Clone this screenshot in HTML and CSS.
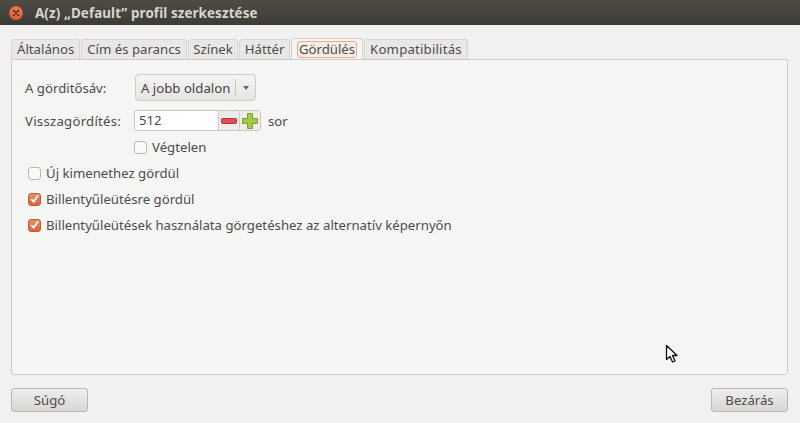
FILE: index.html
```html
<!DOCTYPE html>
<html lang="hu">
<head>
<meta charset="utf-8">
<title>A(z) „Default” profil szerkesztése</title>
<link rel="stylesheet" href="styles.css">
</head>
<body>
<div class="window">
  <header class="titlebar">
    <span class="close"><svg width="8" height="8" viewBox="0 0 8 8"><path d="M1.5 1.5l5 5M6.5 1.5l-5 5" stroke="#4a1c0c" stroke-width="1.4" stroke-linecap="round"/></svg></span>
    <span class="title">A(z) „Default” profil szerkesztése</span>
  </header>
  <main class="content">
    <nav class="tabs">
      <span class="tab t1">Általános</span>
      <span class="tab t2">Cím és parancs</span>
      <span class="tab t3">Színek</span>
      <span class="tab t4">Háttér</span>
      <span class="tab active"><span class="focus">Gördülés</span></span>
      <span class="tab t6">Kompatibilitás</span>
    </nav>
    <section class="panel">
      <div class="row r1">
        <span class="label l1">A görditősáv:</span>
        <span class="combo"><span class="combo-text">A jobb oldalon</span><span class="combo-arrow"><i class="tri"></i></span></span>
      </div>
      <div class="row r2">
        <span class="label l2">Visszagördítés:</span>
        <span class="spin">
          <span class="spin-value">512</span>
          <span class="spin-btn"><svg width="16" height="16" viewBox="0 0 16 16"><rect x="0.5" y="5.5" width="15" height="5" rx="1" fill="#d9505a" stroke="#b5343c"/></svg></span>
          <span class="spin-btn"><svg width="16" height="16" viewBox="0 0 16 16"><path d="M5.5.5h5v5h5v5h-5v5h-5v-5h-5v-5h5z" fill="#a3c84a" stroke="#7c9f2c"/></svg></span>
        </span>
        <span class="unit">sor</span>
      </div>
      <label class="check indent"><span class="box"></span>Végtelen</label>
      <label class="check c1"><span class="box"></span>Új kimenethez gördül</label>
      <label class="check c2"><span class="box on"><svg width="12" height="12" viewBox="0 0 12 12"><path d="M2.5 6l2.5 3L10 2" fill="none" stroke="#fff" stroke-width="2"/></svg></span>Billentyűleütésre gördül</label>
      <label class="check c2"><span class="box on"><svg width="12" height="12" viewBox="0 0 12 12"><path d="M2.5 6l2.5 3L10 2" fill="none" stroke="#fff" stroke-width="2"/></svg></span>Billentyűleütések használata görgetéshez az alternatív képernyőn</label>
      <svg class="cursor" width="14" height="20" viewBox="0 0 14 20"><path d="M1.5 1.5v14l3.500-3 2.500 5.500 2.500-1-2.500-5.500h4.500z" fill="#fff" stroke="#111" stroke-width="1.300" stroke-linejoin="round"/></svg>
    </section>
    <footer class="actions">
      <button class="btn">Súgó</button>
      <button class="btn">Bezárás</button>
    </footer>
  </main>
</div>
</body>
</html>
```
FILE: styles.css
```css
* { box-sizing: border-box; }
html, body { margin: 0; height: 100%; }
body { font-family: "Noto Sans", sans-serif; font-size: 13.2px; color: #4c4c4c; background: #f2f1f0; overflow: hidden; }
.window { width: 800px; height: 423px; display: flex; flex-direction: column; }
.titlebar { height: 25px; flex: none; display: flex; align-items: center; padding-left: 9px; background: linear-gradient(#4f4c45, #3c3b37); }
.close { width: 14px; height: 14px; border-radius: 50%; display: flex; align-items: center; justify-content: center; background: radial-gradient(circle at 50% 40%, #f0805a, #d9501f); margin-right: 12px; }
.close svg { display: block; }
.title { font-size: 13.4px; font-weight: 700; color: #d8d5cc; letter-spacing: .1px; }
.content { flex: 1; display: flex; flex-direction: column; padding: 14px 12px 11px 11px; min-height: 0; }
.tabs { display: flex; height: 20px; gap: 1px; flex: none; position: relative; z-index: 1; }
.tab { height: 20px; padding: 0 5px; line-height: 19px; white-space: nowrap; background: #eae8e6; border: 1px solid #d8d6d3; border-bottom: none; border-radius: 3px 3px 0 0; }
.t3 { padding: 0 4.5px; }
.t4 { padding: 0 4.5px; }
.tab.active { height: 21px; margin-top: -1px; padding: 2px 5px 0; background: #f5f5f4; border-color: #d3d1ce; }
.t6 { padding: 0 5px; letter-spacing: .2px; }
.focus { display: block; height: 17px; line-height: 15px; padding: 0 1px; border: 1px solid #f2a98a; border-radius: 3px; background: #f6ece6; }
.panel { flex: 1; position: relative; display: flex; flex-direction: column; background: #f5f5f4; border: 1px solid #cfcdca; border-radius: 0 0 3px 3px; padding: 14px 0 0 13px; }
.row { display: flex; align-items: center; }
.r1 { height: 27px; }
.r2 { height: 21px; margin-top: 9px; }
.label { display: block; }
.l1 { width: 110px; }
.l2 { width: 109px; letter-spacing: .25px; }
.combo { display: flex; align-items: center; width: 121px; height: 27px; border: 1px solid #cfccc8; border-radius: 4px; background: linear-gradient(#f6f5f4, #e6e4e1); }
.combo-text { flex: 1; padding-left: 5px; white-space: nowrap; color: #444; }
.combo-arrow { width: 20px; height: 17px; border-left: 1px solid #c9c7c3; display: flex; align-items: center; justify-content: center; }
.tri { display: block; width: 0; height: 0; border-left: 3.5px solid transparent; border-right: 3.5px solid transparent; border-top: 4px solid #666; }
.spin { display: flex; width: 127px; height: 21px; border: 1px solid #c9c6c2; border-radius: 3px; overflow: hidden; background: #fff; }
.spin-value { flex: 1; padding-left: 4px; line-height: 19px; }
.spin-btn { width: 21px; border-left: 1px solid #d2d0cc; background: #eeedeb; display: flex; align-items: center; justify-content: center; }
.spin-btn svg { display: block; }
.unit { margin-left: 7px; }
.check { display: flex; align-items: center; height: 18px; white-space: nowrap; }
.indent { margin-left: 109px; margin-top: 7px; }
.c1 { margin-top: 8px; margin-left: 3px; }
.c2 { margin-top: 8px; margin-left: 3px; }
.box { width: 13px; height: 13px; margin-right: 5px; flex: none; display: flex; align-items: center; justify-content: center; border: 1px solid #bdbab6; border-radius: 3px; background: #faf9f8; }
.box.on { background: linear-gradient(#ee8a60, #dc6438); border-color: #b9603c; }
.box svg { display: block; }
.cursor { position: absolute; left: 653px; top: 284px; }
.actions { flex: none; display: flex; justify-content: space-between; margin-top: 13px; }
.btn { width: 77px; height: 24px; padding: 0; font: inherit; color: #4c4c4c; border: 1px solid #b9b7b3; border-radius: 3px; background: linear-gradient(#efeeec, #d9d7d4); }
```
